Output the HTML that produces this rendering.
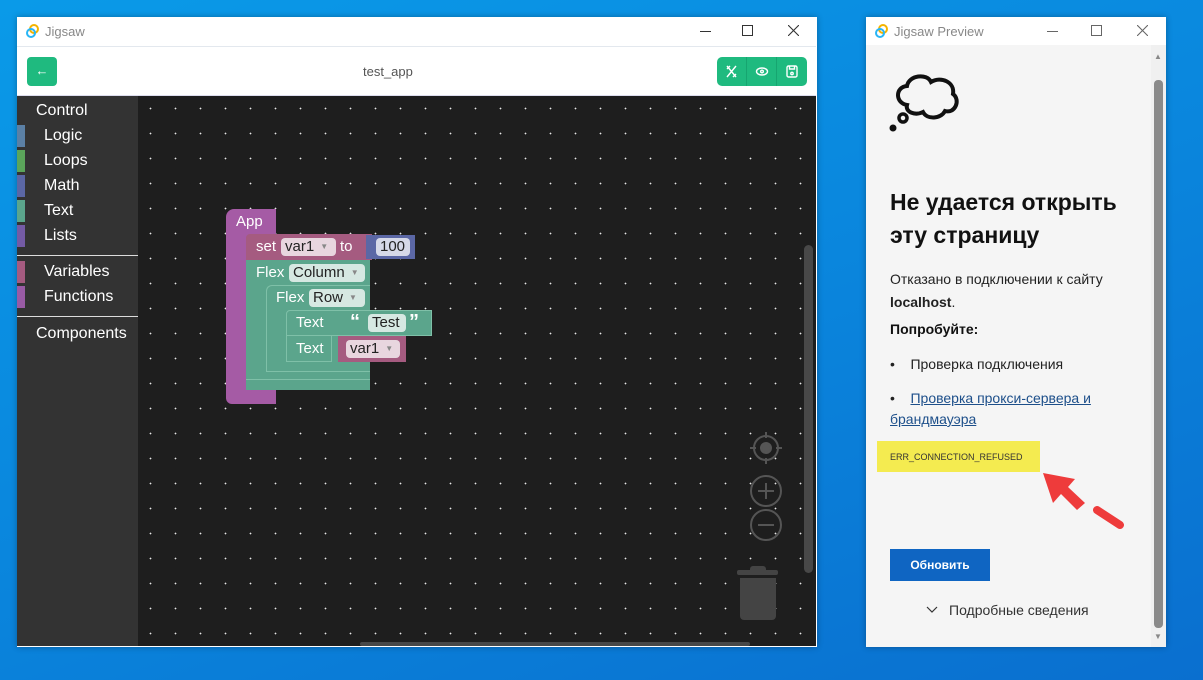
<!DOCTYPE html>
<html><head><meta charset="utf-8"><style>
*{margin:0;padding:0;box-sizing:border-box}
body{width:1203px;height:680px;overflow:hidden;position:relative;background:linear-gradient(160deg,#0a9ae8 0%,#0a86dd 50%,#0a6fcf 100%);font-family:"Liberation Sans",sans-serif}
.a{position:absolute}
.ws{left:138px;top:96px;width:678px;height:550px;background-color:#1e1e1e;background-image:radial-gradient(circle,#e8e8e8 0.7px,transparent 1px);background-size:25px 25px;background-position:0px 0px}
.tb{left:17px;top:96px;width:121px;height:550px;background:#333;color:#fff;font-size:16px}
.tb div{position:absolute;left:27px}
.bar{position:absolute;left:0!important;width:8px;height:22px}
.blk{position:absolute;color:#fff;font-size:15px}
.fld{position:absolute;background:rgba(255,255,255,.75);border-radius:4px;color:#222;font-size:15px;height:18px;line-height:18px;padding-left:4px}
.fd{font-size:8px;color:#888;margin-left:6px;vertical-align:2px}
.pv{font-family:"Liberation Sans","Noto Sans CJK SC",sans-serif;color:#111}
</style></head><body>
<div class="a" style="left:17px;top:17px;width:800px;height:630px;background:#fff;box-shadow:0 0 6px rgba(0,0,0,.3)"></div>
<svg class="a" style="left:26px;top:24px" width="14" height="14" viewBox="0 0 14 14"><circle cx="8" cy="5" r="4" fill="none" stroke="#f4b400" stroke-width="2"/><circle cx="5" cy="9" r="4" fill="none" stroke="#29b6f6" stroke-width="2"/></svg>
<div class="a" style="left:45px;top:24px;font-size:13px;color:#888">Jigsaw</div>
<div class="a" style="left:700px;top:31px;width:11px;border-top:1px solid #333"></div>
<div class="a" style="left:742px;top:25px;width:11px;height:11px;border:1px solid #333"></div>
<svg class="a" style="left:788px;top:25px" width="11" height="11" stroke="#333" stroke-width="1.1"><path d="M0 0L11 11M11 0L0 11"/></svg>
<div class="a" style="left:17px;top:46px;width:799px;height:50px;border-top:1px solid #e3e8ee;border-bottom:1px solid #dde"></div>
<div class="a" style="left:27px;top:57px;width:30px;height:29px;background:#1fba7f;border-radius:4px;color:#fff;text-align:center;line-height:28px;font-size:13px">←</div>
<div class="a" style="left:363px;top:64px;font-size:13px;color:#555">test_app</div>
<div class="a" style="left:717px;top:57px;width:90px;height:29px;background:#1fba7f;border-radius:5px"></div>
<div class="a" style="left:746px;top:57px;width:1px;height:29px;background:#17a570"></div>
<div class="a" style="left:776px;top:57px;width:1px;height:29px;background:#17a570"></div>
<svg class="a" style="left:717px;top:57px" width="90" height="29" fill="none" stroke="#fff" stroke-width="1.4"><path d="M10 9l9 11M19 9l-9 11M10 12l3-3M16 20l3-3"/><ellipse cx="45" cy="14.5" rx="5.5" ry="3.5"/><circle cx="45" cy="14.5" r="1.3"/><rect x="70" y="9" width="10" height="11" rx="1.5"/><path d="M72.5 9v3h5V9"/><circle cx="75" cy="16.5" r="1.2"/></svg>
<div class="a ws"></div>
<div class="a tb">
<div style="left:19px;top:6px">Control</div>
<div class="bar" style="top:29px;background:#5b80a5"></div><div style="top:31px">Logic</div>
<div class="bar" style="top:54px;background:#5ba55b"></div><div style="top:56px">Loops</div>
<div class="bar" style="top:79px;background:#5b67a5"></div><div style="top:81px">Math</div>
<div class="bar" style="top:104px;background:#5ba58c"></div><div style="top:106px">Text</div>
<div class="bar" style="top:129px;background:#745ba5"></div><div style="top:131px">Lists</div>
<div style="left:0;top:159px;width:121px;border-top:1px solid #ddd"></div>
<div class="bar" style="top:165px;background:#a55b80"></div><div style="top:167px">Variables</div>
<div class="bar" style="top:190px;background:#995ba5"></div><div style="top:192px">Functions</div>
<div style="left:0;top:220px;width:121px;border-top:1px solid #ddd"></div>
<div style="left:19px;top:229px">Components</div>
</div>
<div class="blk" style="left:226px;top:209px;width:50px;height:195px;background:#a55ba5;border-radius:8px 0 0 6px"></div>
<div class="blk" style="left:236px;top:213px">App</div>
<div class="blk" style="left:246px;top:234px;width:126px;height:26px;background:#a55b80;border-radius:4px 0 0 0"></div>
<div class="blk" style="left:256px;top:238px">set</div>
<div class="fld" style="left:281px;top:238px;width:55px">var1<span class="fd">▼</span></div>
<div class="blk" style="left:340px;top:238px">to</div>
<div class="blk" style="left:366px;top:235px;width:49px;height:24px;background:#5b67a5"></div>
<div class="fld" style="left:376px;top:238px;width:34px">100</div>
<div class="blk" style="left:246px;top:260px;width:124px;height:130px;background:#5ba58c"></div>
<div class="blk" style="left:256px;top:264px">Flex</div>
<div class="fld" style="left:289px;top:264px;width:76px">Column<span class="fd">▼</span></div>
<div class="blk" style="left:266px;top:285px;width:104px;height:95px;background:#5ba58c;border-left:1px solid #7fc0a8;border-top:1px solid #7fc0a8;border-radius:6px 0 0 6px"></div>
<div class="blk" style="left:276px;top:289px">Flex</div>
<div class="fld" style="left:309px;top:289px;width:56px">Row<span class="fd">▼</span></div>
<div class="blk" style="left:266px;top:371px;width:104px;height:9px;background:#5ba58c;border-top:1px solid #7fc0a8"></div>
<div class="blk" style="left:246px;top:379px;width:124px;height:11px;background:#5ba58c;border-top:1px solid #7fc0a8"></div>
<div class="blk" style="left:286px;top:310px;width:146px;height:26px;background:#5ba58c;border:1px solid #7fc0a8;border-radius:4px 0 0 0"></div>
<div class="blk" style="left:296px;top:314px">Text</div>
<div class="blk" style="left:350px;top:311px;font-weight:bold;font-size:20px">“</div>
<div class="fld" style="left:368px;top:314px;width:38px">Test</div>
<div class="blk" style="left:409px;top:311px;font-weight:bold;font-size:20px">”</div>
<div class="blk" style="left:286px;top:336px;width:46px;height:26px;background:#5ba58c;border:1px solid #7fc0a8;border-top:none"></div>
<div class="blk" style="left:296px;top:340px">Text</div>
<div class="blk" style="left:338px;top:336px;width:68px;height:26px;background:#a55b80"></div>
<div class="fld" style="left:346px;top:340px;width:54px">var1<span class="fd">▼</span></div>
<div class="blk" style="left:286px;top:362px;width:84px;height:9px;background:#5ba58c;border-radius:0 0 0 5px"></div>
<svg class="a" style="left:745px;top:425px" width="45" height="180" fill="none" stroke="#555" stroke-width="2"><circle cx="21" cy="23" r="12"/><circle cx="21" cy="23" r="5" fill="#555"/><path d="M21 7v6M21 33v6M5 23h6M31 23h6"/><circle cx="21" cy="66" r="15"/><path d="M13 66h16M21 58v16"/><circle cx="21" cy="100" r="15"/><path d="M13 100h16"/></svg>
<div class="a" style="left:737px;top:570px;width:41px;height:5px;background:#444;border-radius:2px"></div>
<div class="a" style="left:750px;top:566px;width:16px;height:6px;background:#444;border-radius:3px 3px 0 0"></div>
<div class="a" style="left:740px;top:578px;width:36px;height:42px;background:#444;border-radius:0 0 4px 4px"></div>
<div class="a" style="left:804px;top:245px;width:9px;height:328px;background:#484848;border-radius:5px"></div>
<div class="a" style="left:360px;top:642px;width:390px;height:4px;background:#484848;border-radius:2px"></div>
<div class="a" style="left:866px;top:17px;width:300px;height:630px;background:#f5f5f5;box-shadow:0 0 6px rgba(0,0,0,.3)"></div>
<div class="a" style="left:866px;top:17px;width:300px;height:28px;background:#fff"></div>
<svg class="a" style="left:875px;top:24px" width="14" height="14" viewBox="0 0 14 14"><circle cx="8" cy="5" r="4" fill="none" stroke="#f4b400" stroke-width="2"/><circle cx="5" cy="9" r="4" fill="none" stroke="#29b6f6" stroke-width="2"/></svg>
<div class="a" style="left:894px;top:24px;font-size:13px;color:#888">Jigsaw Preview</div>
<div class="a" style="left:1047px;top:31px;width:11px;border-top:1px solid #666"></div>
<div class="a" style="left:1091px;top:25px;width:11px;height:11px;border:1px solid #666"></div>
<svg class="a" style="left:1137px;top:25px" width="11" height="11" stroke="#666" stroke-width="1.1"><path d="M0 0L11 11M11 0L0 11"/></svg>
<div class="a" style="left:1151px;top:45px;width:15px;height:602px;background:#f0f0f0"></div>
<div class="a" style="left:1154px;top:80px;width:9px;height:548px;background:#8a8a8a;border-radius:4px"></div>
<div class="a" style="left:1154px;top:52px;font-size:8px;color:#888">▲</div>
<div class="a" style="left:1154px;top:632px;font-size:8px;color:#888">▼</div>
<svg class="a" style="left:885px;top:65px" width="85" height="85" fill="none" stroke="#111" stroke-width="4"><path d="M22 40c-12-2-12-18 0-19c2-11 20-13 24-4c10-6 24 0 22 12c8 6 2 20-8 17c-4 8-18 9-22 1c-8 4-18 0-16-7z"/><circle cx="18" cy="53" r="4" stroke-width="3.5"/><circle cx="8" cy="63" r="3.5" fill="#111" stroke="none"/></svg>
<div class="a pv" style="left:890px;top:186px;font-size:23px;font-weight:bold;line-height:33px;width:255px">Не удается открыть эту страницу</div>
<div class="a pv" style="left:890px;top:268px;font-size:14px;line-height:23px;color:#222">Отказано в подключении к сайту<br><b>localhost</b>.</div>
<div class="a pv" style="left:890px;top:321px;font-size:14px;font-weight:bold">Попробуйте:</div>
<div class="a pv" style="left:890px;top:356px;font-size:14px;color:#222">•&nbsp;&nbsp;&nbsp;&nbsp;Проверка подключения</div>
<div class="a pv" style="left:890px;top:388px;font-size:14px;line-height:21px;color:#222;width:230px">•&nbsp;&nbsp;&nbsp;&nbsp;<span style="color:#1d4f8a;text-decoration:underline">Проверка прокси-сервера и брандмауэра</span></div>
<div class="a pv" style="left:877px;top:441px;width:163px;height:31px;background:#f4eb50;font-size:9px;color:#333;padding:11px 0 0 13px">ERR_CONNECTION_REFUSED</div>
<svg class="a" style="left:1035px;top:465px" width="95" height="70"><path d="M8 8L40 14L33 22L50 38L42 45L26 29L18 38Z" fill="#ee3b3b"/><path d="M62 45L85 60" stroke="#ee3b3b" stroke-width="8" stroke-linecap="round"/></svg>
<div class="a pv" style="left:890px;top:549px;width:100px;height:32px;background:#0f65c2;color:#fff;font-size:12px;font-weight:bold;text-align:center;line-height:32px">Обновить</div>
<svg class="a" style="left:926px;top:606px" width="12" height="8" fill="none" stroke="#333" stroke-width="1.2"><path d="M1 1l5 5l5-5"/></svg>
<div class="a pv" style="left:949px;top:602px;font-size:14px;color:#333">Подробные сведения</div>
</body></html>
